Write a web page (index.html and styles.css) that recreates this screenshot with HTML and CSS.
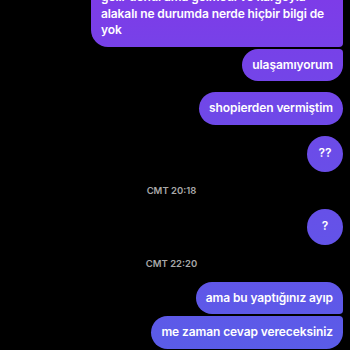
FILE: index.html
```html
<!DOCTYPE html>
<html lang="tr">
<head>
    <meta charset="UTF-8">
    <meta name="viewport" content="width=device-width, initial-scale=1.0">
    <title>Mesajlar</title>
    <link rel="stylesheet" href="styles.css">
</head>
<body>
    <div class="thread">
        <div class="msg first">gelir dendi ama gelmedi ve kargoyla alakalı ne durumda nerde hiçbir bilgi de yok</div>
        <div class="msg next">ulaşamıyorum</div>
        <div class="msg gap">shopierden vermiştim</div>
        <div class="msg round gap">??</div>

        <div class="time">CMT 20:18</div>
        <div class="msg round">?</div>

        <div class="time">CMT 22:20</div>
        <div class="msg first">ama bu yaptığınız ayıp</div>
        <div class="msg next">me zaman cevap vereceksiniz</div>
    </div>
</body>
</html>
```

FILE: styles.css
```css
* {
    margin: 0;
    padding: 0;
    box-sizing: border-box;
}

html, body {
    height: 100%;
    overflow: hidden;
}

body {
    background-color: #000;
    color: #fff;
    font-family: Inter, 'Noto Sans', sans-serif;
}

.thread {
    display: flex;
    flex-direction: column;
    align-items: flex-end;
    padding: 0 7px 0 0;
    margin-top: -19px;
}

.msg {
    max-width: 252px;
    padding: 8px 10px;
    font-size: 12px;
    font-weight: 600;
    letter-spacing: -0.1px;
    line-height: 16.5px;
    border-radius: 17px;
    background: linear-gradient(to bottom, #7d3ce8 0%, #6c4be8 40%, #5a5ce8 100%);
    background-attachment: fixed;
}

.msg.first {
    border-bottom-right-radius: 4px;
}

.msg.next {
    margin-top: 2px;
    border-top-right-radius: 4px;
}

.msg.gap {
    margin-top: 11px;
}

.msg.round {
    width: 36px;
    height: 36px;
    padding: 0;
    border-radius: 50%;
    display: flex;
    align-items: center;
    justify-content: center;
}

.time {
    align-self: stretch;
    text-align: center;
    font-size: 9.5px;
    font-weight: 600;
    color: #a8a8a8;
    line-height: 12px;
    margin: 13px 0 12px;
}
```
